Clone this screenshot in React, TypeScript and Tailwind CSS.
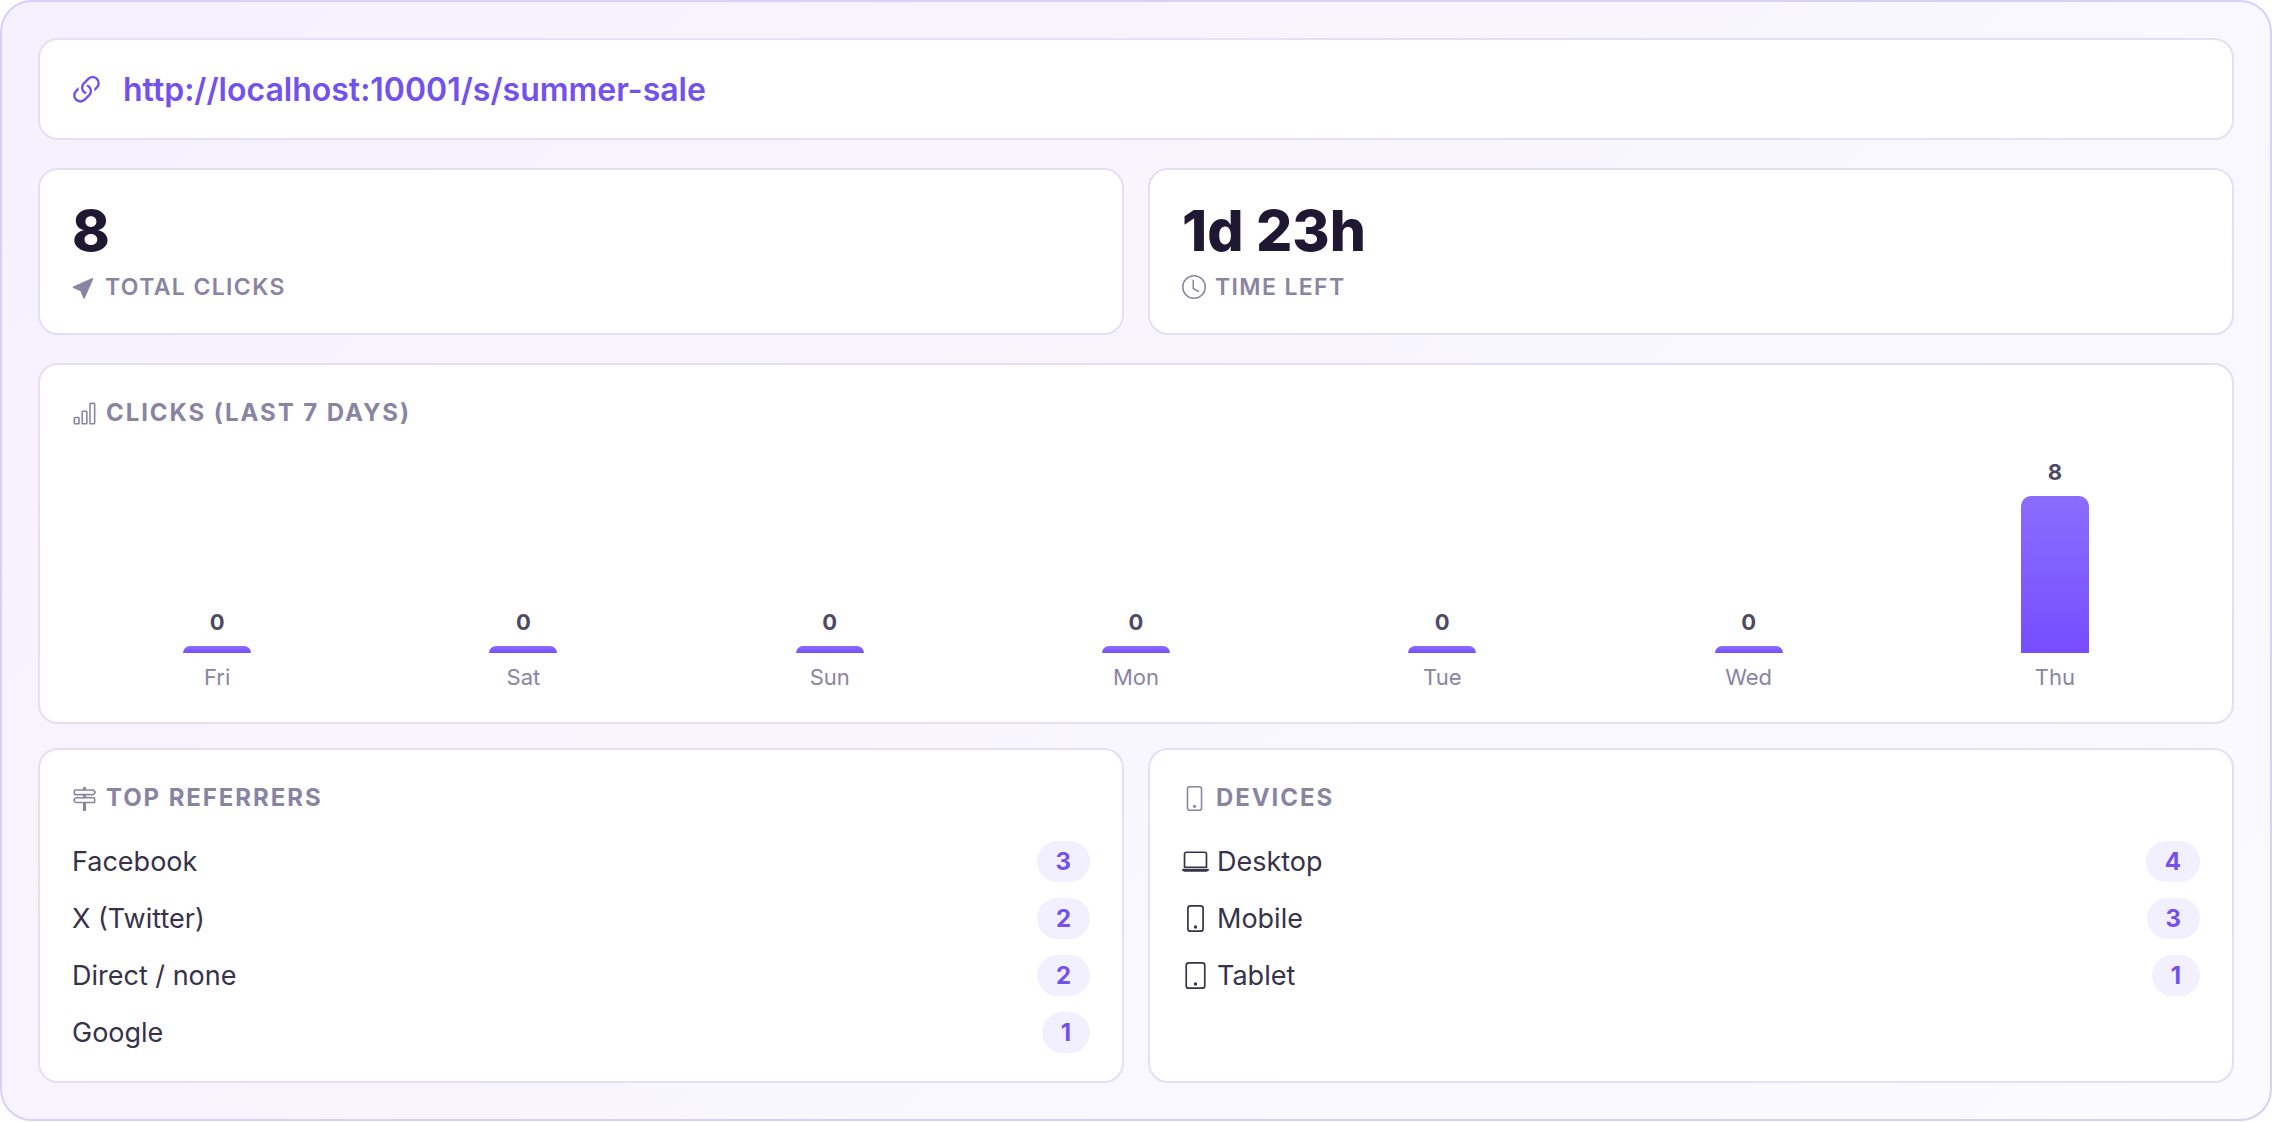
import type { ReactNode } from "react";
import {
  BsBarChart,
  BsClock,
  BsCursorFill,
  BsLaptop,
  BsLink45Deg,
  BsPhone,
  BsSignpost2,
  BsTablet,
} from "react-icons/bs";

const SHORT_URL = "http://localhost:10001/s/summer-sale";

const days = [
  { label: "Fri", clicks: 0 },
  { label: "Sat", clicks: 0 },
  { label: "Sun", clicks: 0 },
  { label: "Mon", clicks: 0 },
  { label: "Tue", clicks: 0 },
  { label: "Wed", clicks: 0 },
  { label: "Thu", clicks: 8 },
];

const referrers = [
  { label: "Facebook", count: 3 },
  { label: "X (Twitter)", count: 2 },
  { label: "Direct / none", count: 2 },
  { label: "Google", count: 1 },
];

const devices = [
  { label: "Desktop", count: 4, icon: <BsLaptop className="size-[27px]" /> },
  { label: "Mobile", count: 3, icon: <BsPhone className="size-[27px]" /> },
  { label: "Tablet", count: 1, icon: <BsTablet className="size-[27px]" /> },
];

const MAX_BAR = 157;
const MIN_BAR = 7;

function Card({ className, children }: { className: string; children: ReactNode }) {
  return (
    <section className={`rounded-[20px] border-2 border-[#e4dff7] bg-white px-8 ${className}`}>{children}</section>
  );
}

function Heading({ icon, children }: { icon: ReactNode; children: ReactNode }) {
  return (
    <h2 className="flex items-center gap-[9px] text-2xl leading-8 font-bold tracking-[0.08em] text-[#8a84a3] uppercase">
      {icon}
      {children}
    </h2>
  );
}

function Stat({ value, icon, label }: { value: string; icon: ReactNode; label: string }) {
  return (
    <Card className="pt-8 pb-[30px]">
      <p className="text-[57px] leading-[58px] font-extrabold text-[#1e1832]">{value}</p>
      <p className="mt-[11px] flex items-center gap-[9px] text-[23px] leading-8 font-semibold tracking-[0.06em] text-[#8a84a3] uppercase">
        {icon}
        {label}
      </p>
    </Card>
  );
}

function CountList({ items }: { items: { label: string; count: number; icon?: ReactNode }[] }) {
  return (
    <ul className="mt-[19px]">
      {items.map((item) => (
        <li key={item.label} className="flex items-center justify-between py-2 text-[27px] leading-[41px] text-[#37324a]">
          <span className="flex items-center gap-2">
            {item.icon}
            {item.label}
          </span>
          <span className="rounded-full bg-[#f2efff] px-[19px] text-2xl leading-[41px] font-bold text-[#7351ec]">
            {item.count}
          </span>
        </li>
      ))}
    </ul>
  );
}

export default function App() {
  const peak = Math.max(...days.map((day) => day.clicks));

  return (
    <main className="rounded-[32px] border-2 border-[#d8d0f8] bg-linear-135 from-[#f5f1ff] to-[#fbfaff] p-9 font-['Inter',sans-serif]">
      <Card className="flex items-center gap-[22px] pt-[29px] pb-[27px]">
        <BsLink45Deg viewBox="2 2 12 12" className="size-[29px] text-[#7351ec]" />
        <a href={SHORT_URL} className="text-[32px] leading-[42px] font-semibold text-[#7351ec]">
          {SHORT_URL}
        </a>
      </Card>

      <div className="mt-7 grid grid-cols-2 gap-6">
        <Stat value="8" icon={<BsCursorFill className="size-6" />} label="Total clicks" />
        <Stat value="1d 23h" icon={<BsClock className="size-6" />} label="Time left" />
      </div>

      <Card className="mt-7 pt-8 pb-[31px]">
        <Heading icon={<BsBarChart className="size-[25px]" />}>Clicks (last 7 days)</Heading>
        <ol className="mt-6 grid grid-cols-7 gap-4">
          {days.map((day) => (
            <li key={day.label} className="flex h-[238px] flex-col items-center justify-end text-[22px] leading-7">
              <span className="font-bold text-[#4e4965]">{day.clicks}</span>
              <span
                className="mt-2.5 w-[68px] rounded-t-[10px] bg-linear-to-b from-[#8c6cff] to-[#764dff]"
                style={{ height: Math.max(MIN_BAR, (day.clicks / peak) * MAX_BAR) }}
              />
              <span className="mt-2.5 text-[#8a84a3]">{day.label}</span>
            </li>
          ))}
        </ol>
      </Card>

      <div className="mt-6 grid grid-cols-2 gap-6">
        <Card className="pt-8 pb-5">
          <Heading icon={<BsSignpost2 className="size-[25px]" />}>Top referrers</Heading>
          <CountList items={referrers} />
        </Card>
        <Card className="pt-8 pb-5">
          <Heading icon={<BsPhone className="size-[25px]" />}>Devices</Heading>
          <CountList items={devices} />
        </Card>
      </div>
    </main>
  );
}
